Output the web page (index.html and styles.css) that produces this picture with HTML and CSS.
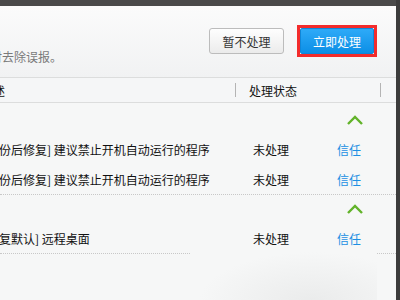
FILE: index.html
```html
<!DOCTYPE html>
<html lang="zh-CN">
<head>
    <meta charset="UTF-8">
    <title>安全检测</title>
    <link rel="stylesheet" href="styles.css">
</head>
<body>
    <div class="window">
        <div class="panel">
            <div class="topbar"></div>

            <div class="head">
                <p class="tip"><span class="shift-tip">请及时去除误报。</span></p>
                <div class="actions">
                    <button class="btn btn-gray">暂不处理</button>
                    <span class="focus"><button class="btn btn-blue">立即处理</button></span>
                </div>
            </div>

            <div class="cols">
                <div class="col-desc"><span class="shift-desc">问题描述</span></div>
                <span class="sep"></span>
                <div class="col-status">处理状态</div>
                <span class="sep"></span>
            </div>

            <div class="list">
                <div class="group first">
                    <div class="group-head">
                        <svg class="chevron" width="16" height="10" viewBox="0 0 16 10">
                            <polyline points="1,9 8,2 15,9" fill="none" stroke="#62b32a" stroke-width="2.4"/>
                        </svg>
                    </div>
                    <div class="row">
                        <div class="desc"><span class="shift">[备份后修复] 建议禁止开机自动运行的程序</span></div>
                        <div class="status">未处理</div>
                        <a class="trust">信任</a>
                    </div>
                    <div class="row">
                        <div class="desc"><span class="shift">[备份后修复] 建议禁止开机自动运行的程序</span></div>
                        <div class="status">未处理</div>
                        <a class="trust">信任</a>
                    </div>
                </div>

                <div class="group">
                    <div class="group-head">
                        <svg class="chevron" width="16" height="10" viewBox="0 0 16 10">
                            <polyline points="1,9 8,2 15,9" fill="none" stroke="#62b32a" stroke-width="2.4"/>
                        </svg>
                    </div>
                    <div class="row">
                        <div class="desc"><span class="shift">[恢复默认] 远程桌面</span></div>
                        <div class="status">未处理</div>
                        <a class="trust">信任</a>
                    </div>
                </div>

                <div class="shade"></div>
            </div>
        </div>
    </div>
</body>
</html>
```

FILE: styles.css
```css
body {
    margin: 0;
    width: 400px;
    height: 300px;
    overflow: hidden;
    background-color: #3c3c3c;
    font-family: "Noto Sans CJK SC", "Microsoft YaHei", sans-serif;
    font-size: 12px;
    color: #111;
}
.window {
    display: flex;
    height: 300px;
}
.panel {
    width: 396px;
    display: flex;
    flex-direction: column;
    background-color: #f6f7f7;
}
.topbar {
    height: 6px;
    background-color: #4a4a4a;
}
.head {
    height: 72px;
    box-sizing: border-box;
    display: flex;
    justify-content: space-between;
    background: linear-gradient(#fbfbfb, #f1f2f3);
    border-bottom: 1px solid #dcdddd;
}
.tip {
    margin: 43px 0 0;
    width: 150px;
    overflow: hidden;
    white-space: nowrap;
    line-height: 16px;
    color: #7a7a7a;
}
.shift-tip {
    margin-left: -34px;
}
.actions {
    display: flex;
    gap: 13px;
    padding: 19px 19px 0 0;
    align-items: flex-start;
}
.btn {
    height: 26px;
    padding: 0;
    font-family: inherit;
    font-size: 12px;
    cursor: pointer;
}
.btn-gray {
    width: 75px;
    margin-top: 3px;
    background: linear-gradient(#fefefe, #ebebeb);
    border: 1px solid #bcbcbc;
    border-radius: 3px;
    color: #333;
}
.focus {
    display: block;
    border: 3px solid #f32c2c;
}
.btn-blue {
    display: block;
    width: 74px;
    background: linear-gradient(#2eaaf8, #0c8fe6);
    border: 1px solid #1086d8;
    border-radius: 2px;
    color: #fff;
}
.cols {
    height: 24px;
    display: flex;
    align-items: center;
    background-color: #f5f6f7;
    border-bottom: 1px solid #dcdddd;
}
.col-desc {
    width: 235px;
    overflow: hidden;
    white-space: nowrap;
}
.shift-desc {
    margin-left: -43px;
}
.sep {
    width: 1px;
    height: 14px;
    background-color: #b4b4b4;
}
.col-status {
    width: 131px;
    padding-left: 13px;
}
.list {
    position: relative;
    flex: 1;
}
.group {
    border-bottom: 1px dotted #c8c8c8;
}
.group.first {
    padding-top: 3px;
}
.group-head {
    height: 28px;
    display: flex;
    align-items: center;
    padding-left: 347px;
}
.row {
    height: 30px;
    display: flex;
    align-items: center;
}
.desc {
    width: 253px;
    overflow: hidden;
    white-space: nowrap;
}
.shift {
    margin-left: -17px;
}
.status {
    width: 84px;
}
.trust {
    color: #1c8fe3;
    cursor: pointer;
}
.shade {
    position: absolute;
    left: 190px;
    top: 149px;
    width: 187px;
    height: 50px;
    background: radial-gradient(ellipse 60% 100% at 65% 100%, #eaebeb, #f6f7f7);
}
```
